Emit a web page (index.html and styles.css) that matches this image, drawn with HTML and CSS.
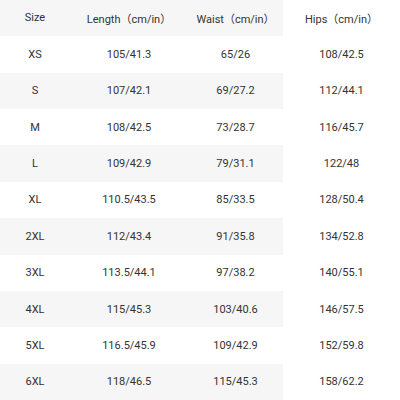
FILE: index.html
```html
<!DOCTYPE html>
<html>
<head>
<meta charset="utf-8">
<link rel="stylesheet" href="styles.css">
</head>
<body>
<div class="table">
  <div class="row alt head"><div class="c">Size</div><div class="c">Length（cm/in）</div><div class="c">Waist（cm/in）</div><div class="c hips">Hips（cm/in）</div></div>
  <div class="row"><div class="c">XS</div><div class="c">105/41.3</div><div class="c">65/26</div><div class="c hips">108/42.5</div></div>
  <div class="row alt"><div class="c">S</div><div class="c">107/42.1</div><div class="c">69/27.2</div><div class="c hips">112/44.1</div></div>
  <div class="row"><div class="c">M</div><div class="c">108/42.5</div><div class="c">73/28.7</div><div class="c hips">116/45.7</div></div>
  <div class="row alt"><div class="c">L</div><div class="c">109/42.9</div><div class="c">79/31.1</div><div class="c hips">122/48</div></div>
  <div class="row"><div class="c">XL</div><div class="c">110.5/43.5</div><div class="c">85/33.5</div><div class="c hips">128/50.4</div></div>
  <div class="row alt"><div class="c">2XL</div><div class="c">112/43.4</div><div class="c">91/35.8</div><div class="c hips">134/52.8</div></div>
  <div class="row"><div class="c">3XL</div><div class="c">113.5/44.1</div><div class="c">97/38.2</div><div class="c hips">140/55.1</div></div>
  <div class="row alt"><div class="c">4XL</div><div class="c">115/45.3</div><div class="c">103/40.6</div><div class="c hips">146/57.5</div></div>
  <div class="row"><div class="c">5XL</div><div class="c">116.5/45.9</div><div class="c">109/42.9</div><div class="c hips">152/59.8</div></div>
  <div class="row alt"><div class="c">6XL</div><div class="c">118/46.5</div><div class="c">115/45.3</div><div class="c hips">158/62.2</div></div>
</div>
</body>
</html>
```
FILE: styles.css
```css
html, body {
  margin: 0;
  padding: 0;
  background: #ffffff;
}
.table {
  width: 400px;
  height: 400px;
  display: grid;
  grid-template-rows: repeat(11, 1fr);
  font-family: Roboto, "Noto Sans CJK SC", sans-serif;
  font-size: 11px;
  color: #333333;
}
.row {
  display: grid;
  grid-template-columns: 70px 118px 95px 117px;
}
.c {
  display: flex;
  align-items: center;
  justify-content: center;
  white-space: nowrap;
}
.alt .c {
  background: #f6f6f6;
}
.alt .c.hips {
  background: #ffffff;
}
.head .c {
  padding-bottom: 1px;
}
```
